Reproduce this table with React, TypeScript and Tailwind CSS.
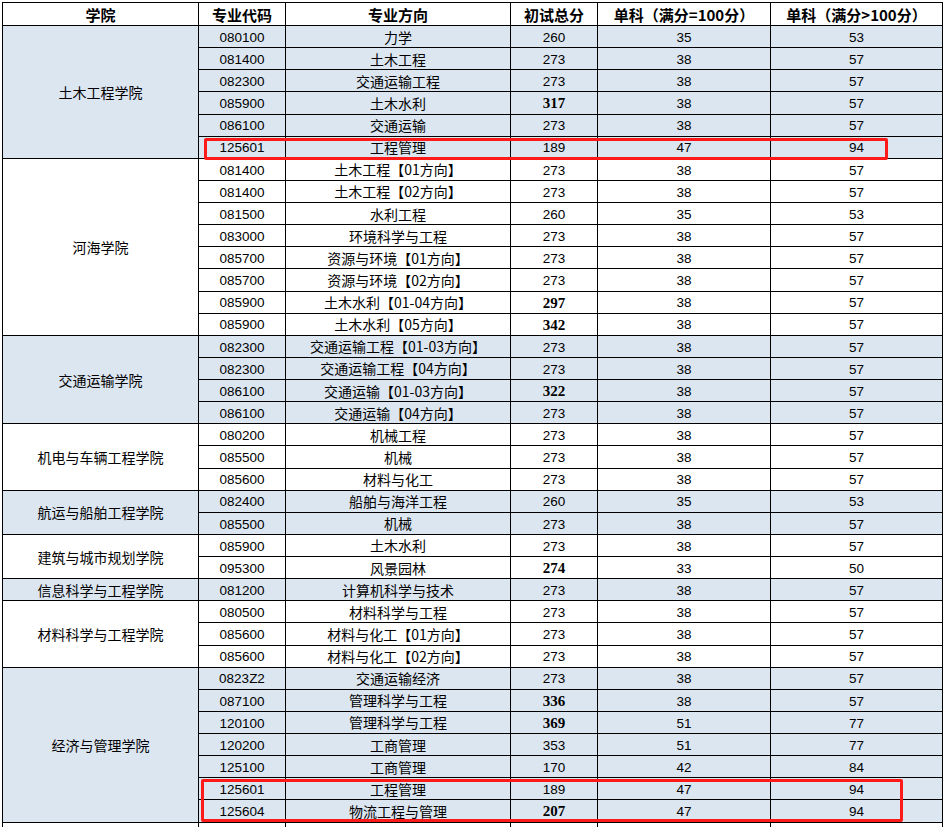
import { Fragment } from "react";

type Row = { code: string; major: string; total: string; bold?: boolean; s1: string; s2: string };
type Group = { name: string; tinted: boolean; span: string; rows: Row[] };

const groups: Group[] = [
  {
    name: "土木工程学院",
    tinted: true,
    span: "row-span-6",
    rows: [
      { code: "080100", major: "力学", total: "260", s1: "35", s2: "53" },
      { code: "081400", major: "土木工程", total: "273", s1: "38", s2: "57" },
      { code: "082300", major: "交通运输工程", total: "273", s1: "38", s2: "57" },
      { code: "085900", major: "土木水利", total: "317", bold: true, s1: "38", s2: "57" },
      { code: "086100", major: "交通运输", total: "273", s1: "38", s2: "57" },
      { code: "125601", major: "工程管理", total: "189", s1: "47", s2: "94" },
    ],
  },
  {
    name: "河海学院",
    tinted: false,
    span: "row-span-8",
    rows: [
      { code: "081400", major: "土木工程【01方向】", total: "273", s1: "38", s2: "57" },
      { code: "081400", major: "土木工程【02方向】", total: "273", s1: "38", s2: "57" },
      { code: "081500", major: "水利工程", total: "260", s1: "35", s2: "53" },
      { code: "083000", major: "环境科学与工程", total: "273", s1: "38", s2: "57" },
      { code: "085700", major: "资源与环境【01方向】", total: "273", s1: "38", s2: "57" },
      { code: "085700", major: "资源与环境【02方向】", total: "273", s1: "38", s2: "57" },
      { code: "085900", major: "土木水利【01-04方向】", total: "297", bold: true, s1: "38", s2: "57" },
      { code: "085900", major: "土木水利【05方向】", total: "342", bold: true, s1: "38", s2: "57" },
    ],
  },
  {
    name: "交通运输学院",
    tinted: true,
    span: "row-span-4",
    rows: [
      { code: "082300", major: "交通运输工程【01-03方向】", total: "273", s1: "38", s2: "57" },
      { code: "082300", major: "交通运输工程【04方向】", total: "273", s1: "38", s2: "57" },
      { code: "086100", major: "交通运输【01-03方向】", total: "322", bold: true, s1: "38", s2: "57" },
      { code: "086100", major: "交通运输【04方向】", total: "273", s1: "38", s2: "57" },
    ],
  },
  {
    name: "机电与车辆工程学院",
    tinted: false,
    span: "row-span-3",
    rows: [
      { code: "080200", major: "机械工程", total: "273", s1: "38", s2: "57" },
      { code: "085500", major: "机械", total: "273", s1: "38", s2: "57" },
      { code: "085600", major: "材料与化工", total: "273", s1: "38", s2: "57" },
    ],
  },
  {
    name: "航运与船舶工程学院",
    tinted: true,
    span: "row-span-2",
    rows: [
      { code: "082400", major: "船舶与海洋工程", total: "260", s1: "35", s2: "53" },
      { code: "085500", major: "机械", total: "273", s1: "38", s2: "57" },
    ],
  },
  {
    name: "建筑与城市规划学院",
    tinted: false,
    span: "row-span-2",
    rows: [
      { code: "085900", major: "土木水利", total: "273", s1: "38", s2: "57" },
      { code: "095300", major: "风景园林", total: "274", bold: true, s1: "33", s2: "50" },
    ],
  },
  {
    name: "信息科学与工程学院",
    tinted: true,
    span: "row-span-1",
    rows: [{ code: "081200", major: "计算机科学与技术", total: "273", s1: "38", s2: "57" }],
  },
  {
    name: "材料科学与工程学院",
    tinted: false,
    span: "row-span-3",
    rows: [
      { code: "080500", major: "材料科学与工程", total: "273", s1: "38", s2: "57" },
      { code: "085600", major: "材料与化工【01方向】", total: "273", s1: "38", s2: "57" },
      { code: "085600", major: "材料与化工【02方向】", total: "273", s1: "38", s2: "57" },
    ],
  },
  {
    name: "经济与管理学院",
    tinted: true,
    span: "row-span-7",
    rows: [
      { code: "0823Z2", major: "交通运输经济", total: "273", s1: "38", s2: "57" },
      { code: "087100", major: "管理科学与工程", total: "336", bold: true, s1: "38", s2: "57" },
      { code: "120100", major: "管理科学与工程", total: "369", bold: true, s1: "51", s2: "77" },
      { code: "120200", major: "工商管理", total: "353", s1: "51", s2: "77" },
      { code: "125100", major: "工商管理", total: "170", s1: "42", s2: "84" },
      { code: "125601", major: "工程管理", total: "189", s1: "47", s2: "94" },
      { code: "125604", major: "物流工程与管理", total: "207", bold: true, s1: "47", s2: "94" },
    ],
  },
];

const headers = ["学院", "专业代码", "专业方向", "初试总分", "单科（满分=100分）", "单科（满分>100分）"];

const num = "font-['Liberation_Sans','Noto_Sans_CJK_SC',sans-serif] text-[13.5px] pt-[2px]";
const cjk = "font-['Noto_Sans_CJK_SC',sans-serif] text-[14px]";

export default function App() {
  return (
    <div className="relative h-[827px] w-[949px] overflow-hidden bg-white text-black">
      <div className="ml-[2px] mt-[2px] grid w-[941px] grid-cols-[195px_86px_224px_86px_172px_171px] grid-rows-[22px_repeat(37,21.14px)] gap-px bg-black p-px pb-0">
        {headers.map((h) => (
          <div
            key={h}
            className="flex items-center justify-center bg-white font-['Noto_Sans_CJK_SC',sans-serif] text-[15px] font-bold leading-none"
          >
            {h}
          </div>
        ))}

        {groups.map((g) => {
          const bg = g.tinted ? "bg-[#dce6f1]" : "bg-white";
          return g.rows.map((r, i) => (
            <Fragment key={g.name + i}>
              {i === 0 && (
                <div className={`${g.span} ${bg} ${cjk} flex items-center justify-center leading-none`}>
                  {g.name}
                </div>
              )}
              <div className={`${bg} ${num} flex items-center justify-center leading-none`}>{r.code}</div>
              <div className={`${bg} ${cjk} flex items-center justify-center leading-none whitespace-nowrap`}>{r.major}</div>
              <div
                className={`${bg} flex items-center justify-center leading-none ${
                  r.bold ? "font-['Liberation_Serif',serif] text-[15px] font-bold pt-[2px]" : num
                }`}
              >
                {r.total}
              </div>
              <div className={`${bg} ${num} flex items-center justify-center leading-none`}>{r.s1}</div>
              <div className={`${bg} ${num} flex items-center justify-center leading-none`}>{r.s2}</div>
            </Fragment>
          ));
        })}

        {/* next sheet row peeking at the bottom */}
        <div className="bg-white" />
        <div className="bg-white" />
        <div className="bg-white" />
        <div className="bg-white" />
        <div className="bg-white" />
        <div className="bg-white" />
      </div>

      {/* red highlight boxes */}
      <div className="absolute left-[204px] top-[138px] h-[22px] w-[684px] rounded-[2px] border-[3px] border-[#ff1a1a]" />
      <div className="absolute left-[201px] top-[779px] h-[43px] w-[702px] rounded-[2px] border-[3px] border-[#ff1a1a]" />
    </div>
  );
}
